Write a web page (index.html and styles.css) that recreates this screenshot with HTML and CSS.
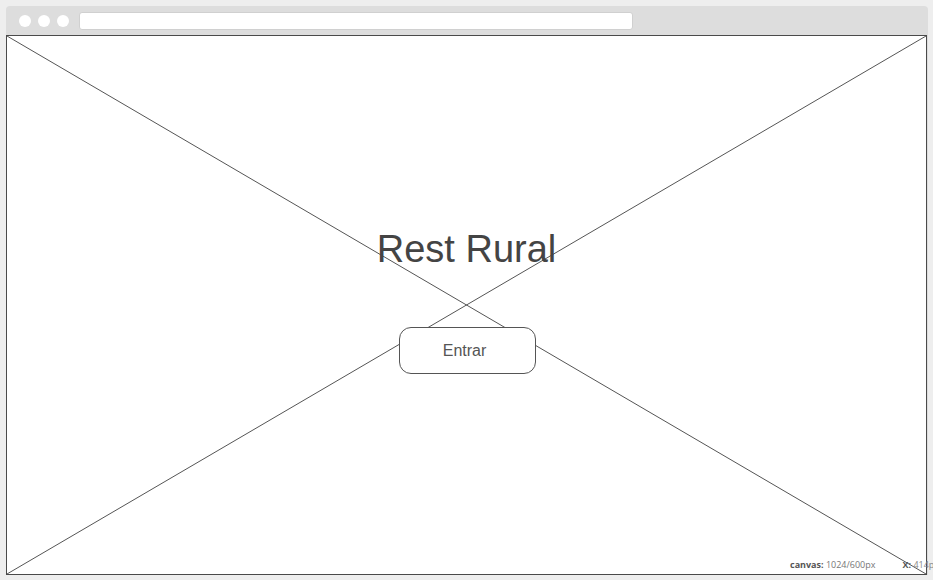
FILE: index.html
```html
<!DOCTYPE html>
<html lang="es">
<head>
<meta charset="utf-8">
<title>Rest Rural</title>
<link rel="stylesheet" href="styles.css">
</head>
<body>
<div class="page">
  <div class="window">
    <div class="toolbar">
      <span class="dot"></span>
      <span class="dot"></span>
      <span class="dot"></span>
      <div class="url"></div>
    </div>
    <div class="canvas">
      <svg class="cross" viewBox="0 0 919 538" preserveAspectRatio="none" aria-hidden="true">
        <line x1="0" y1="0" x2="919" y2="538"/>
        <line x1="919" y1="0" x2="0" y2="538"/>
      </svg>
      <div class="content">
        <h1 class="title">Rest Rural</h1>
        <button class="btn" type="button">Entrar</button>
      </div>
      <div class="status"><b>canvas:</b> 1024/600px<span class="coord"><b>X:</b> 414px</span></div>
    </div>
  </div>
</div>
</body>
</html>
```
FILE: styles.css
```css
html, body {
  margin: 0;
  padding: 0;
  background: #eeeeee;
  overflow: hidden;
}
.page {
  width: 933px;
  height: 580px;
  padding: 6px 0 0 6px;
  box-sizing: border-box;
}
.window {
  width: 922px;
  background: #dddddd;
  border-radius: 4px 4px 0 0;
}
.toolbar {
  height: 29px;
  display: flex;
  align-items: center;
  padding-left: 13px;
  box-sizing: border-box;
}
.dot {
  width: 12px;
  height: 12px;
  border-radius: 50%;
  background: #ffffff;
  margin-right: 7px;
}
.url {
  margin-left: 3px;
  width: 554px;
  height: 18px;
  background: #ffffff;
  border-radius: 3px;
  border: 1px solid #d0d0d0;
  box-sizing: border-box;
}
.canvas {
  position: relative;
  width: 921px;
  height: 540px;
  box-sizing: border-box;
  border: 1px solid #4a4a4a;
  background: #ffffff;
}
.cross {
  position: absolute;
  left: 0;
  top: 0;
  width: 100%;
  height: 100%;
}
.cross line {
  stroke: #555555;
  stroke-width: 1;
}
.content {
  position: relative;
  display: flex;
  flex-direction: column;
  align-items: center;
  padding-top: 191px;
}
.title {
  margin: 0;
  font-family: "Liberation Sans", Arial, sans-serif;
  font-weight: normal;
  font-size: 38px;
  line-height: 44px;
  color: #444444;
}
.btn {
  margin-top: 56px;
  margin-left: 1px;
  width: 137px;
  height: 47px;
  border: 1px solid #555555;
  border-radius: 12px;
  background: #ffffff;
  font-family: "Liberation Sans", Arial, sans-serif;
  font-size: 16px;
  color: #555555;
  padding: 0;
  padding-right: 5px;
}
.status {
  position: absolute;
  left: 783px;
  top: 522px;
  white-space: nowrap;
  font-family: "Open Sans", "DejaVu Sans", sans-serif;
  font-size: 9px;
  color: #777777;
}
.status b {
  color: #555555;
  font-weight: 700;
}
.coord {
  margin-left: 27px;
  color: #888888;
}
```
